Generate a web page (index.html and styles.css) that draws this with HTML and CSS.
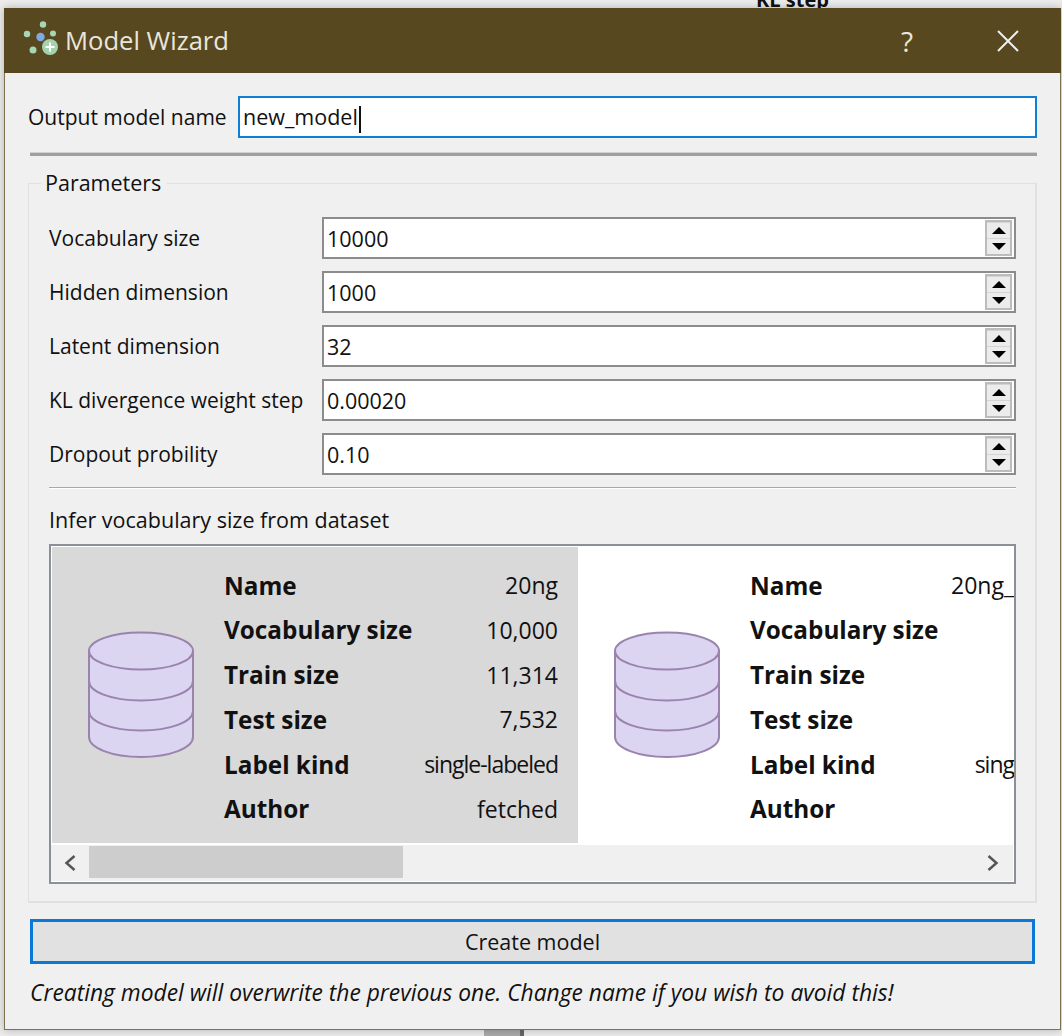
FILE: index.html
```html
<!DOCTYPE html>
<html>

<head>
    <title>Model Wizard</title>
    <link rel="stylesheet" href="styles.css">
</head>

<body>
    <div class="behind-text">KL step</div>
    <div class="behind-block"></div>

    <div class="window">
        <div class="titlebar">
            <svg class="app-icon" width="38" height="40" viewBox="0 0 38 40">
                <circle cx="5" cy="13" r="3.2" fill="#a9d6b2" />
                <circle cx="21" cy="3.500" r="3.200" fill="#a9d6b2" />
                <circle cx="31" cy="12.500" r="3" fill="#a9d6b2" />
                <circle cx="11" cy="29" r="3.500" fill="#a9d6b2" />
                <circle cx="18.500" cy="16" r="4.200" fill="#7fa9e6" />
                <circle cx="28" cy="26" r="8" fill="#a3d3ad" />
                <path d="M23.500 26h9M28 21.500v9" stroke="#fff" stroke-width="2" />
            </svg>
            <span class="title">Model Wizard</span>
            <span class="help">?</span>
            <svg class="close" width="22" height="22" viewBox="0 0 22 22">
                <path d="M1 1l20 20M21 1L1 21" stroke="#efefef" stroke-width="2" fill="none" />
            </svg>
        </div>

        <div class="content">
            <div class="name-row">
                <label class="name-label">Output model name</label>
                <div class="name-field">new_model<span class="caret"></span></div>
            </div>
            <div class="thick-line"></div>

            <fieldset class="group">
                <legend>Parameters</legend>

                <div class="param">
                    <label>Vocabulary size</label>
                    <div class="spin">
                        <span class="spin-value">10000</span>
                        <div class="spin-btns"><span class="up"></span><span class="down"></span></div>
                    </div>
                </div>
                <div class="param">
                    <label>Hidden dimension</label>
                    <div class="spin">
                        <span class="spin-value">1000</span>
                        <div class="spin-btns"><span class="up"></span><span class="down"></span></div>
                    </div>
                </div>
                <div class="param">
                    <label>Latent dimension</label>
                    <div class="spin">
                        <span class="spin-value">32</span>
                        <div class="spin-btns"><span class="up"></span><span class="down"></span></div>
                    </div>
                </div>
                <div class="param">
                    <label>KL divergence weight step</label>
                    <div class="spin">
                        <span class="spin-value">0.00020</span>
                        <div class="spin-btns"><span class="up"></span><span class="down"></span></div>
                    </div>
                </div>
                <div class="param">
                    <label>Dropout probility</label>
                    <div class="spin">
                        <span class="spin-value">0.10</span>
                        <div class="spin-btns"><span class="up"></span><span class="down"></span></div>
                    </div>
                </div>

                <div class="thin-line"></div>
                <div class="infer">Infer vocabulary size from dataset</div>

                <div class="datasets">
                    <div class="cards">
                        <div class="card selected">
                            <svg class="db" width="106" height="128" viewBox="0 0 106 128">
                                <path class="db-body" d="M1 20v86c0 11 23 20 52 20s52-9 52-20V20z" />
                                <ellipse class="db-body" cx="53" cy="20" rx="52" ry="18.500" />
                                <path class="db-line" d="M1 50c0 11 23 19.500 52 19.500S105 61 105 50M1 80c0 11 23 19.500 52 19.500S105 91 105 80" />
                            </svg>
                            <div class="info">
                                <b>Name</b><span>20ng</span>
                                <b>Vocabulary size</b><span>10,000</span>
                                <b>Train size</b><span>11,314</span>
                                <b>Test size</b><span>7,532</span>
                                <b>Label kind</b><span class="tight">single-labeled</span>
                                <b>Author</b><span>fetched</span>
                            </div>
                        </div>
                        <div class="card">
                            <svg class="db" width="106" height="128" viewBox="0 0 106 128">
                                <path class="db-body" d="M1 20v86c0 11 23 20 52 20s52-9 52-20V20z" />
                                <ellipse class="db-body" cx="53" cy="20" rx="52" ry="18.500" />
                                <path class="db-line" d="M1 50c0 11 23 19.500 52 19.500S105 61 105 50M1 80c0 11 23 19.500 52 19.500S105 91 105 80" />
                            </svg>
                            <div class="info clipped">
                                <b>Name</b><span>20ng_</span>
                                <b>Vocabulary size</b><span></span>
                                <b>Train size</b><span></span>
                                <b>Test size</b><span></span>
                                <b>Label kind</b><span class="tight">sing</span>
                                <b>Author</b><span></span>
                            </div>
                        </div>
                    </div>
                    <div class="scrollbar">
                        <svg width="14" height="18" viewBox="0 0 14 18">
                            <path d="M11.500 2L3.500 9l8 7" stroke="#555" stroke-width="2.500" fill="none" />
                        </svg>
                        <div class="track"><div class="thumb"></div></div>
                        <svg width="14" height="18" viewBox="0 0 14 18">
                            <path d="M2.500 2l8 7-8 7" stroke="#555" stroke-width="2.500" fill="none" />
                        </svg>
                    </div>
                </div>
            </fieldset>

            <button class="create">Create model</button>
            <p class="note">Creating model will overwrite the previous one. Change name if you wish to avoid this!</p>
        </div>
    </div>
</body>

</html>
```

FILE: styles.css
```css
html,
body {
    height: 100%;
}

body {
    margin: 0;
    overflow: hidden;
    background: #ececec;
    font-family: "Open Sans", "Noto Sans", sans-serif;
    font-size: 21.5px;
    color: #111;
}

.behind-text {
    position: absolute;
    left: 756px;
    top: -14px;
    font-weight: 700;
    font-size: 20px;
}

.behind-block {
    position: absolute;
    left: 484px;
    top: 1028px;
    width: 36px;
    height: 8px;
    background: #a9a9a9;
    border-right: 4px solid #666;
}

.window {
    position: relative;
    box-sizing: border-box;
    width: 1057px;
    height: 1022px;
    margin: 8px 0 0 4px;
    background: #f0f0f0;
    border: 1px solid #7d7350;
    border-top: none;
    box-shadow: 0 0 8px rgba(0, 0, 0, 0.25);
}

.titlebar {
    display: flex;
    align-items: center;
    height: 65px;
    margin: 0 -1px;
    padding: 0 42px 0 18px;
    background: #584820;
    color: #e9e6dc;
}

.app-icon {
    margin-right: 5px;
}

.title {
    flex-grow: 1;
    font-size: 25.6px;
}

.help {
    margin-right: 84px;
    font-size: 28px;
}

.content {
    padding: 23px 23px 0 23px;
}

.name-row {
    display: flex;
    align-items: center;
    gap: 13px;
}

.name-label {
    width: 197px;
    flex-shrink: 0;
    font-size: 21px;
    white-space: nowrap;
}

.name-field {
    flex-grow: 1;
    box-sizing: border-box;
    height: 42px;
    padding-left: 3px;
    line-height: 38px;
    background: #fff;
    border: 2px solid #0f7fd6;
}

.caret {
    display: inline-block;
    width: 2px;
    height: 27px;
    margin-left: 1px;
    vertical-align: middle;
    background: #111;
}

.thick-line {
    height: 3px;
    margin: 14px 0 0 2px;
    background: #a0a0a0;
    border-top: 1px solid #d0d0d0;
}

.group {
    box-sizing: border-box;
    height: 732px;
    margin: 15px 0 0 0;
    padding: 22px 19px 0 20px;
    border: 2px solid #e0e0e0;
    border-width: 1px 2px 2px 1px;
}

.group legend {
    margin-left: -8px;
    padding: 0 6px 0 4px;
    line-height: 24px;
}

.param {
    display: flex;
    align-items: center;
    margin-bottom: 12px;
}

.param label {
    width: 273px;
    flex-shrink: 0;
    font-size: 21px;
}

.spin {
    display: flex;
    align-items: center;
    flex-grow: 1;
    box-sizing: border-box;
    height: 42px;
    padding: 0 2px 0 3px;
    background: #fff;
    border: 2px solid #8c8c8c;
}

.spin-value {
    flex-grow: 1;
}

.spin-btns {
    display: flex;
    flex-direction: column;
    width: 27px;
    height: 36px;
    border: 2px solid #bcbcbc;
    box-sizing: border-box;
}

.spin-btns span {
    position: relative;
    flex-grow: 1;
    background: #ececec;
    border-top: 1px solid #d4d4d4;
}

.up::after,
.down::after {
    content: "";
    position: absolute;
    left: 5px;
    top: 4px;
    border-left: 7px solid transparent;
    border-right: 7px solid transparent;
}

.up::after {
    border-bottom: 7px solid #000;
}

.down::after {
    border-top: 7px solid #000;
}

.thin-line {
    height: 1px;
    margin-top: 1px;
    background: #a8a8a8;
    border-bottom: 1px solid #fff;
}

.infer {
    margin-top: 17px;
    line-height: 27px;
}

.datasets {
    box-sizing: border-box;
    height: 340px;
    margin-top: 11px;
    background: #fff;
    border: 2px solid #8a8f98;
    overflow: hidden;
}

.cards {
    display: flex;
    height: 296px;
    margin: 1px 0 0 1px;
}

.card {
    display: flex;
    flex-shrink: 0;
    align-items: center;
    box-sizing: border-box;
    width: 436px;
    padding-left: 36px;
}

.card.selected {
    width: 526px;
    background: #d9d9d9;
}

.db {
    flex-shrink: 0;
    margin-right: 30px;
}

.db-body {
    fill: #dcd5f2;
    stroke: #9a84ad;
    stroke-width: 2;
}

.db-line {
    fill: none;
    stroke: #9a84ad;
    stroke-width: 2;
}

.info {
    display: grid;
    grid-template-columns: 1fr auto;
    flex-grow: 1;
    grid-auto-rows: 44.7px;
    align-items: center;
    padding: 4px 20px 0 0;
}

.info.clipped {
    padding-right: 0;
}

.info b {
    font-size: 24.3px;
}

.info span {
    font-size: 23px;
    text-align: right;
    white-space: nowrap;
}

.info .tight {
    letter-spacing: -1px;
}

.scrollbar {
    display: flex;
    align-items: center;
    justify-content: space-between;
    height: 36px;
    margin: 2px 1px 0 0;
    padding-left: 12px;
    padding-right: 13px;
    background: #f0f0f0;
}

.track {
    flex-grow: 1;
    align-self: flex-start;
    margin: 1px 0 0 12px;
}

.thumb {
    width: 314px;
    height: 32px;
    background: #cdcdcd;
}

.create {
    display: block;
    box-sizing: border-box;
    width: 1005px;
    height: 45px;
    margin: 16px 0 0 2px;
    background: #e1e1e1;
    border: 3px solid #0a78d7;
    font-family: inherit;
    font-size: 21.5px;
    color: #111;
}

.note {
    margin: 15px 0 0 2px;
    font-size: 22.8px;
    font-style: italic;
    line-height: 27px;
    white-space: nowrap;
}
```
